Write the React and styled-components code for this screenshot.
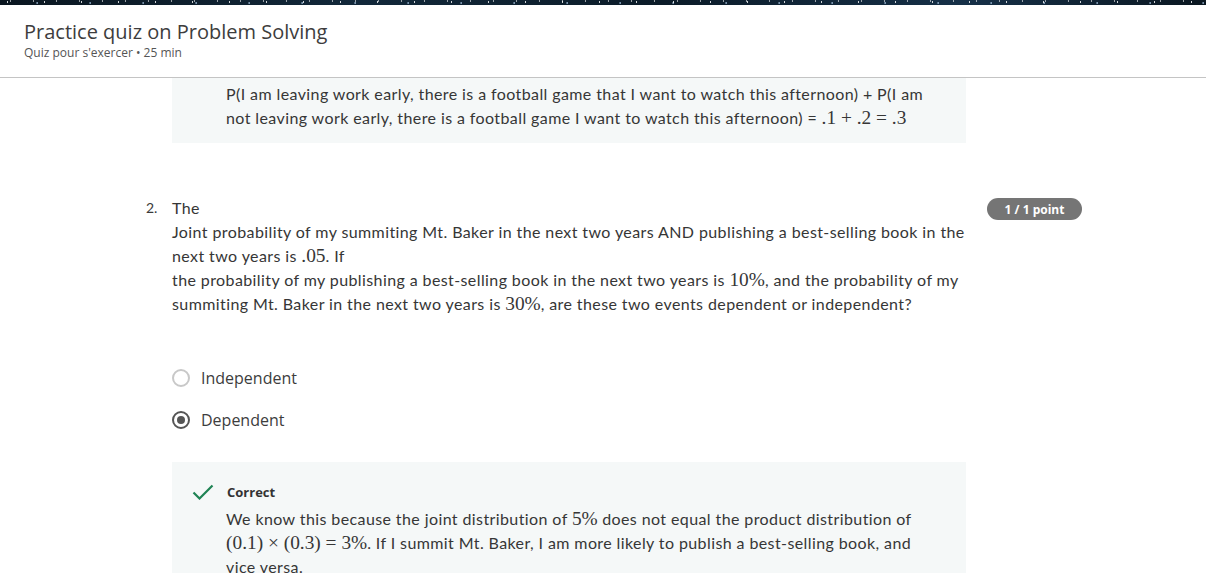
import React from "react";
import styled, { createGlobalStyle } from "styled-components";

const GlobalStyle = createGlobalStyle`
  html, body { margin: 0; padding: 0; background: #ffffff; }
  body { font-family: "Open Sans", "Noto Sans", sans-serif; color: #333333; overflow: hidden; }
  * { box-sizing: border-box; }
`;

const Page = styled.div`
  width: 1206px;
  height: 573px;
  overflow: hidden;
  display: flex;
  flex-direction: column;
`;

const StarBand = styled.div`
  height: 5px;
  flex: none;
  background-color: #0d1c2a;
  background-image:
    radial-gradient(circle at 20% 40%, rgba(255,255,255,0.8) 0 0.6px, transparent 1px),
    radial-gradient(circle at 70% 60%, rgba(180,210,240,0.7) 0 0.6px, transparent 1px),
    radial-gradient(circle at 45% 20%, rgba(255,255,255,0.6) 0 0.5px, transparent 1px),
    linear-gradient(90deg, #0a1620, #12283a 30%, #0b1b28 55%, #163048 80%, #0a1620);
  background-size: 37px 5px, 53px 5px, 23px 5px, 100% 100%;
`;

const Header = styled.header`
  flex: none;
  height: 73px;
  padding: 14px 24px 0;
  border-bottom: 1px solid #c4c4c4;
`;

const Title = styled.h1`
  margin: 0;
  font-size: 20px;
  line-height: 26px;
  font-weight: 400;
  color: #3d3d3d;
`;

const Subtitle = styled.div`
  font-size: 12px;
  line-height: 16px;
  color: #555555;
`;

const Body = styled.main`
  flex: 1;
  padding-left: 146px;
  display: flex;
  flex-direction: column;
`;

const Feedback = styled.div`
  width: 794px;
  margin-left: 26px;
  margin-top: ${(p) => p.$top || 0}px;
  background: #f5f8f8;
  padding: ${(p) => p.$pad};
`;

const Prose = styled.div`
  font-family: "Lato", "Open Sans", sans-serif;
  font-size: 16px;
  line-height: 24px;
  letter-spacing: 0.4px;
  color: #363636;
`;

const M = styled.span`
  font-family: "Liberation Serif", "DejaVu Serif", serif;
  font-size: 1.21em;
  line-height: 1;
  letter-spacing: 0;
  white-space: nowrap;
`;

const QuestionRow = styled.section`
  margin-top: 53px;
  display: flex;
  align-items: flex-start;
`;

const QNum = styled.div`
  width: 26px;
  flex: none;
  font-family: "Lato", "Open Sans", sans-serif;
  font-size: 14px;
  line-height: 24px;
  color: #3a3a3a;
`;

const QText = styled(Prose)`
  width: 794px;
  flex: none;
`;

const Badge = styled.div`
  margin-left: 21px;
  margin-top: 2px;
  width: 95px;
  height: 22px;
  border-radius: 11px;
  background: #757575;
  color: #ffffff;
  font-size: 12px;
  font-weight: 700;
  display: flex;
  align-items: center;
  justify-content: center;
`;

const Options = styled.div`
  margin: 50px 0 0 26px;
  display: flex;
  flex-direction: column;
  gap: 18px;
`;

const Option = styled.label`
  display: flex;
  align-items: center;
  gap: 11px;
  height: 24px;
  font-size: 16px;
  color: #3d3d3d;
`;

const Radio = styled.span`
  width: 18px;
  height: 18px;
  border-radius: 50%;
  border: 2px solid ${(p) => (p.$checked ? "#555555" : "#c8c8c8")};
  display: flex;
  align-items: center;
  justify-content: center;
  flex: none;
  &::after {
    content: "";
    width: 8px;
    height: 8px;
    border-radius: 50%;
    background: ${(p) => (p.$checked ? "#555555" : "transparent")};
  }
`;

const Result = styled.div`
  display: flex;
  align-items: center;
  gap: 13px;
  height: 20px;
  margin-left: 20px;
`;

const ResultLabel = styled.span`
  font-size: 13px;
  font-weight: 700;
  color: #333333;
`;

const Explanation = styled(Prose)`
  margin: 5px 0 0 54px;
`;

const Check = () => (
  <svg width="22" height="16" viewBox="0 0 22 16" fill="none">
    <path d="M1.5 8.5 L7.5 14.5 L20.5 1.5" stroke="#1f8354" strokeWidth="2.2" />
  </svg>
);

export default function App() {
  return (
    <Page>
      <GlobalStyle />
      <StarBand />
      <Header>
        <Title>Practice quiz on Problem Solving</Title>
        <Subtitle>Quiz pour s'exercer • 25 min</Subtitle>
      </Header>
      <Body>
        <Feedback $pad="4px 24px 13px 54px">
          <Prose>
            P(I am leaving work early, there is a football game that I want to watch this afternoon) + P(I am not leaving work early, there is a football game I want to watch this afternoon) = <M>.1 + .2 = .3</M>
          </Prose>
        </Feedback>
        <QuestionRow>
          <QNum>2.</QNum>
          <QText>
            The
            <br />
            Joint probability of my summiting Mt. Baker in the next two years AND publishing a best-selling book in the next two years is <M>.05</M>. If
            <br />
            the probability of my publishing a best-selling book in the next two years is <M>10%</M>, and the probability of my summiting Mt. Baker in the next two years is <M>30%</M>, are these two events dependent or independent?
          </QText>
          <Badge>1 / 1 point</Badge>
        </QuestionRow>
        <Options>
          <Option>
            <Radio />
            Independent
          </Option>
          <Option>
            <Radio $checked />
            Dependent
          </Option>
        </Options>
        <Feedback $pad="20px 24px 16px 0" $top={30}>
          <Result>
            <Check />
            <ResultLabel>Correct</ResultLabel>
          </Result>
          <Explanation>
            We know this because the joint distribution of <M>5%</M> does not equal the product distribution of <M>(0.1) × (0.3) = 3%</M>. If I summit Mt. Baker, I am more likely to publish a best-selling book, and vice versa.
          </Explanation>
        </Feedback>
      </Body>
    </Page>
  );
}
